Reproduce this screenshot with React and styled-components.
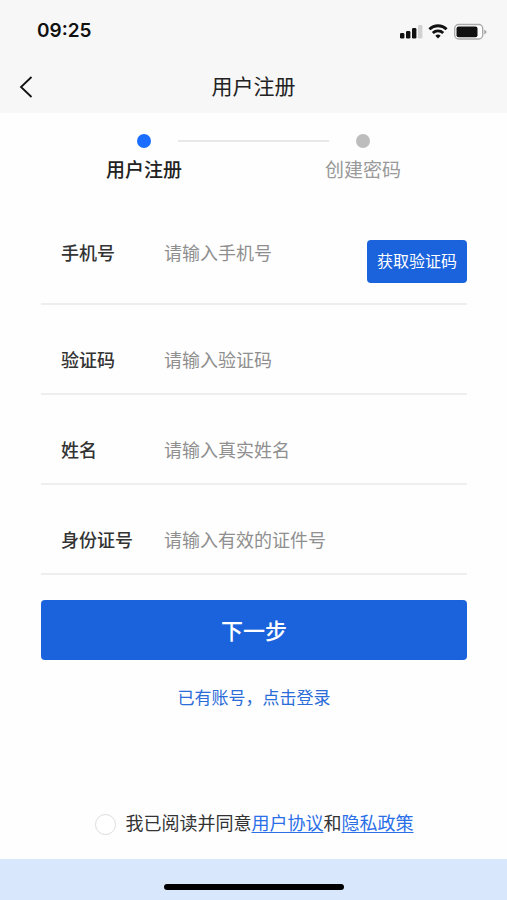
import React from "react";
import styled, { createGlobalStyle } from "styled-components";

const GlobalStyle = createGlobalStyle`
  *, *::before, *::after { box-sizing: border-box; }
  body {
    margin: 0;
    background: #fefefe;
    color: #333;
    font-family: "Liberation Sans", "Noto Sans CJK SC", sans-serif;
  }
  button, input { font: inherit; }
`;

const Page = styled.div`
  display: flex;
  flex-direction: column;
  min-height: 100vh;
`;

const Header = styled.header`
  background: #f7f7f7;
`;

const StatusBar = styled.div`
  display: flex;
  align-items: center;
  justify-content: space-between;
  height: 62px;
  padding: 0 20px 0 37px;
`;

const Clock = styled.time`
  color: #111;
  font: 600 19px/24px Inter, sans-serif;
`;

const StatusIcons = styled.svg`
  display: block;
  width: 90px;
  height: 20px;
`;

const NavBar = styled.div`
  display: grid;
  grid-template-columns: 52px 1fr 52px;
  align-items: center;
  height: 51px;
  padding-bottom: 2px;
`;

const BackButton = styled.button`
  display: flex;
  align-items: center;
  justify-content: center;
  height: 44px;
  padding: 0;
  border: 0;
  background: none;
  color: #111;
`;

const Title = styled.h1`
  margin: 0;
  color: #222;
  font-size: 21px;
  font-weight: 400;
  line-height: 30px;
  text-align: center;
`;

const Steps = styled.ol`
  display: flex;
  margin: 21px 110px 0;
  padding: 0;
  list-style: none;
`;

const Step = styled.li`
  display: flex;
  flex: none;
  flex-direction: column;
  align-items: center;
  gap: 8px;
  width: 68px;
  color: ${({ $active }) => ($active ? "#222" : "#999")};
  font-size: 19px;
  font-weight: ${({ $active }) => ($active ? 500 : 400)};
  line-height: 30px;
  white-space: nowrap;

  &::before {
    content: "";
    width: 14px;
    height: 14px;
    border-radius: 50%;
    background: ${({ $active }) => ($active ? "#1a6dff" : "#bdbdbd")};
  }
`;

const StepLine = styled.li`
  flex: 1;
  height: 2px;
  margin-top: 6px;
  background: #e8e8e8;
`;

const Form = styled.form`
  display: flex;
  flex: 1;
  flex-direction: column;
  margin: 28px 40px 0 41px;
`;

const Field = styled.div`
  display: flex;
  align-items: flex-end;
  min-height: 90px;
  padding: 0 0 18px 20px;
  border-bottom: 2px solid #eee;
`;

const PhoneField = styled(Field)`
  min-height: 91px;
  padding-bottom: 20px;
`;

const Label = styled.label`
  flex: none;
  width: 103px;
  margin-bottom: ${({ $raised }) => ($raised ? "15px" : "0")};
  color: #333;
  font-size: 18px;
  font-weight: 500;
  line-height: 28px;
`;

const TextInput = styled.input`
  flex: 1;
  min-width: 0;
  height: 28px;
  margin-bottom: ${({ $raised }) => ($raised ? "15px" : "0")};
  padding: 0;
  border: 0;
  outline: 0;
  background: none;
  color: #333;
  font-size: 18px;
  line-height: 28px;

  &::placeholder {
    color: #8f8f8f;
    opacity: 1;
  }
`;

const Button = styled.button`
  padding: 0 10px 3px;
  border: 0;
  border-radius: 4px;
  background: #1b63dc;
  color: #fff;
`;

const CodeButton = styled(Button)`
  flex: none;
  height: 43px;
  font-size: 16px;
`;

const SubmitButton = styled(Button)`
  flex: none;
  height: 60px;
  margin-top: 25px;
  font-size: 22px;
  font-weight: 500;
`;

const LoginLink = styled.a`
  align-self: center;
  margin-top: 27px;
  color: #2a6cd8;
  font-size: 17px;
  line-height: 24px;
  text-decoration: none;
`;

const Agreement = styled.div`
  display: flex;
  align-items: center;
  align-self: center;
  gap: 10px;
  margin: auto 0 21px;
  padding-top: 24px;
  font-size: 18px;
  line-height: 28px;

  a {
    color: #2a6fe8;
    text-underline-offset: 2px;
  }
`;

const AgreeCheck = styled.input`
  flex: none;
  width: 21px;
  height: 21px;
  margin: 0;
  border: 1px solid #dcdcdc;
  border-radius: 50%;
  appearance: none;
  background: #fff;

  &:checked {
    border: 6px solid #1b63dc;
  }
`;

const HomeArea = styled.footer`
  display: flex;
  justify-content: center;
  height: 41px;
  padding-top: 25px;
  background: #d9e7fd;
`;

const HomeIndicator = styled.div`
  width: 180px;
  height: 6px;
  border-radius: 3px;
  background: #000;
`;

const fields = [
  { id: "code", label: "验证码", placeholder: "请输入验证码" },
  { id: "name", label: "姓名", placeholder: "请输入真实姓名" },
  { id: "idNumber", label: "身份证号", placeholder: "请输入有效的证件号" },
];

function SystemIcons() {
  return (
    <StatusIcons viewBox="0 0 90 20" aria-hidden="true">
      <g fill="#111">
        <rect x="3" y="12" width="4.4" height="5.6" rx="1.3" />
        <rect x="9" y="10" width="4.4" height="7.6" rx="1.3" />
        <rect x="15" y="7" width="4.4" height="10.6" rx="1.3" />
        <rect x="21" y="4" width="4.4" height="13.6" rx="1.3" fill="#d2d2d2" />
      </g>
      <g fill="none" stroke="#111" strokeWidth="2.8">
        <path d="M32.4 8.2a12.4 12.4 0 0 1 17.2 0" />
        <path d="M35.8 12a7.5 7.5 0 0 1 10.4 0" />
      </g>
      <path d="M41 17.6l-2.7-2.8a3.9 3.9 0 0 1 5.4 0z" fill="#111" />
      <rect x="57.7" y="3.5" width="28" height="14.5" rx="4" fill="#fff" stroke="#aaa" strokeWidth="1.4" />
      <rect x="59.5" y="5.4" width="21" height="10.8" rx="2" fill="#111" />
      <path d="M87.2 8.8q2.4.8 2.4 2.3t-2.4 2.3z" fill="#aaa" />
    </StatusIcons>
  );
}

export default function App() {
  return (
    <>
      <GlobalStyle />
      <Page>
        <Header>
          <StatusBar>
            <Clock>09:25</Clock>
            <SystemIcons />
          </StatusBar>
          <NavBar>
            <BackButton type="button" aria-label="返回">
              <svg width="14" height="22" viewBox="0 0 14 22" fill="none" stroke="currentColor" strokeWidth="1.8">
                <path d="M12.5 1L2 11l10.5 10" />
              </svg>
            </BackButton>
            <Title>用户注册</Title>
          </NavBar>
        </Header>
        <Steps>
          <Step $active aria-current="step">用户注册</Step>
          <StepLine role="presentation" />
          <Step>创建密码</Step>
        </Steps>
        <Form onSubmit={(event) => event.preventDefault()}>
          <PhoneField>
            <Label $raised htmlFor="phone">手机号</Label>
            <TextInput $raised id="phone" type="tel" placeholder="请输入手机号" />
            <CodeButton type="button">获取验证码</CodeButton>
          </PhoneField>
          {fields.map(({ id, label, placeholder }) => (
            <Field key={id}>
              <Label htmlFor={id}>{label}</Label>
              <TextInput id={id} type="text" placeholder={placeholder} />
            </Field>
          ))}
          <SubmitButton type="submit">下一步</SubmitButton>
          <LoginLink href="#login">已有账号，点击登录</LoginLink>
          <Agreement>
            <AgreeCheck id="agree" type="checkbox" />
            <span>
              <label htmlFor="agree">我已阅读并同意</label>
              <a href="#terms">用户协议</a>和<a href="#privacy">隐私政策</a>
            </span>
          </Agreement>
        </Form>
        <HomeArea>
          <HomeIndicator />
        </HomeArea>
      </Page>
    </>
  );
}
